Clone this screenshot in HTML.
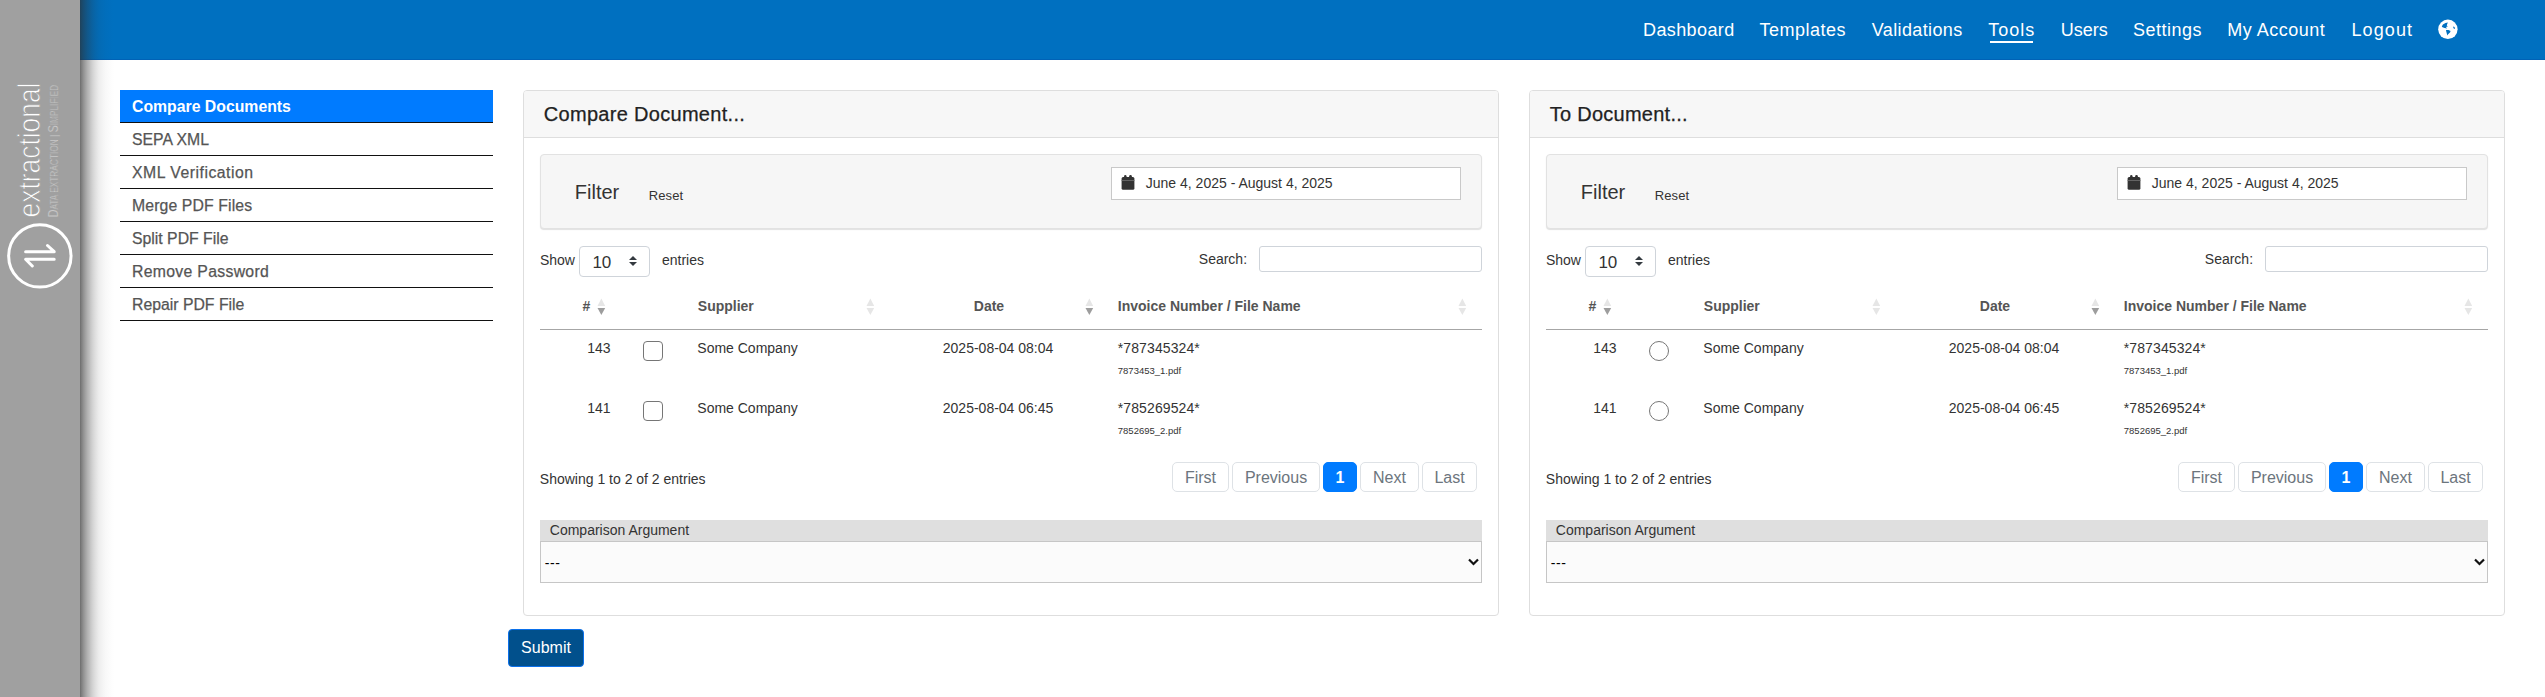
<!DOCTYPE html>
<html><head><meta charset="utf-8">
<style>
*{box-sizing:border-box;margin:0;padding:0}
html,body{width:2545px;height:697px;overflow:hidden;background:#fff;font-family:"Liberation Sans",sans-serif;color:#212529}
.abs{position:absolute}
#side{position:absolute;left:0;top:0;width:80px;height:697px;background:#a0a0a0;z-index:5}
#shad{position:absolute;left:80px;top:0;width:36px;height:697px;z-index:5;background:linear-gradient(to right,rgba(46,46,46,0.67) 0.5px,rgba(46,46,46,0.617) 1.5px,rgba(46,46,46,0.569) 2.5px,rgba(46,46,46,0.522) 3.5px,rgba(46,46,46,0.445) 5.5px,rgba(46,46,46,0.368) 7.5px,rgba(46,46,46,0.311) 9.5px,rgba(46,46,46,0.273) 10.5px,rgba(46,46,46,0.215) 12.5px,rgba(46,46,46,0.167) 14.5px,rgba(46,46,46,0.129) 16.5px,rgba(46,46,46,0.096) 18.5px,rgba(46,46,46,0.072) 20.5px,rgba(46,46,46,0.053) 22.5px,rgba(46,46,46,0.033) 25.5px,rgba(46,46,46,0.019) 28.5px,rgba(46,46,46,0.005) 32.5px,rgba(46,46,46,0) 35.5px)}
#nav{position:absolute;left:80px;top:0;width:2465px;height:60px;background:#0070c0;border-bottom:1px solid #0062b6}
.nl{position:absolute;top:19px;font-size:18px;color:#fff;white-space:nowrap;line-height:22px}
#menu{position:absolute;left:120px;top:90px;width:373px}
#menu div{height:33px;border-bottom:1px solid #111;font-size:15.8px;color:#555;padding-left:12px;line-height:34px;white-space:nowrap;-webkit-text-stroke:0.25px #555}
#menu div.act{background:#007bff;color:#fff;font-weight:bold;-webkit-text-stroke:0}
.t{position:absolute;white-space:nowrap;line-height:1}
.pg{border:1px solid #dee2e6;border-radius:5px;color:#6c757d;font-size:16px;text-align:center;line-height:30px;background:#fff}
.pg.act{background:#007bff;border-color:#007bff;color:#fff;font-weight:bold}
</style></head><body>
<div id="side"><svg width="80" height="697" viewBox="0 0 80 697" style="position:absolute;left:0;top:0">
<g transform="translate(40,217.5) rotate(-90)"><text x="0" y="0" transform="scale(0.841,1)" font-family="Liberation Sans" font-size="31.4" fill="#fff" stroke="#a0a0a0" stroke-width="0.9">extractional</text></g>
<g transform="translate(57.6,217.5) rotate(-90)"><text x="0" y="0" transform="scale(0.776,1)" font-family="Liberation Sans" font-size="10.7" fill="#dadada" stroke="#a0a0a0" stroke-width="0.45"><tspan font-size="14.2">D</tspan>ATA EXTRACTION | <tspan font-size="14.2">S</tspan>IMPLIFIED</text></g>
<circle cx="39.85" cy="255.9" r="31.2" fill="none" stroke="#fff" stroke-width="3"/>
<path d="M25.6 251.7 L54.2 251.7 L47.5 245.5 M54.2 259.2 L25.6 259.2 L32.3 266" fill="none" stroke="#fff" stroke-width="3" stroke-linecap="round" stroke-linejoin="round"/>
</svg></div>
<div id="shad"></div>
<div id="nav">
 <span class="nl" style="left:1563.0px;letter-spacing:0.4px">Dashboard</span>
 <span class="nl" style="left:1679.5px;letter-spacing:0.5px">Templates</span>
 <span class="nl" style="left:1791.8px;letter-spacing:0.37px">Validations</span>
 <span class="nl" style="left:1908.2px;letter-spacing:1.0px">Tools</span>
 <span class="nl" style="left:1980.8000000000002px;letter-spacing:0px">Users</span>
 <span class="nl" style="left:2052.9px;letter-spacing:0.5px">Settings</span>
 <span class="nl" style="left:2147.2px;letter-spacing:0.5px">My Account</span>
 <span class="nl" style="left:2271.5px;letter-spacing:1.1px">Logout</span>
</div>
<div class="abs" style="left:1990px;top:41px;width:43px;height:2px;background:#fff"></div>
<svg class="abs" style="left:2433px;top:14px" width="30" height="30" viewBox="0 0 30 30"><circle cx="14.9" cy="15.3" r="9.7" fill="#fff"/><path d="M8.8 12.5 L9.9 10.5 L12.5 9 L14.9 8.4 L14.2 10.1 L13.8 11.4 L14.8 12.6 L12.8 13 L14.2 14.6 L11.6 13.9 L9.5 13.3 Z M13 16.1 L15.5 15.9 L17.6 17 L17 18.5 L15.1 20.2 L14.4 21.5 L13.8 19.4 L13.2 17.3 Z M20.2 12.5 L21.5 12.9 L22 14.6 L21.1 15.1 L20.3 13.8 Z" fill="#0070c0"/></svg>
<div id="menu">
 <div class="act" style="letter-spacing:0px">Compare Documents</div>
 <div style="letter-spacing:0px">SEPA XML</div>
 <div style="letter-spacing:0.5px">XML Verification</div>
 <div style="letter-spacing:0.11px">Merge PDF Files</div>
 <div style="letter-spacing:0px">Split PDF File</div>
 <div style="letter-spacing:0.3px">Remove Password</div>
 <div style="letter-spacing:0px">Repair PDF File</div>
</div>
<div class="abs" style="left:523px;top:90px;width:976px;height:526px;border:1px solid #dedede;border-radius:4px;background:#fff"></div>
<div class="abs" style="left:524px;top:91px;width:974px;height:47px;background:#f7f7f7;border-bottom:1px solid #dedede;border-radius:3px 3px 0 0"></div>
<span class="t" style="left:543.8px;top:104.07px;font-size:20px;color:#222;letter-spacing:0.3px;-webkit-text-stroke:0.25px #222">Compare Document...</span>
<div class="abs" style="left:540px;top:154px;width:942px;height:75px;background:#f6f6f6;border:1px solid #e2e2e2;border-radius:4px;box-shadow:0 1px 1px rgba(0,0,0,.12)"></div>
<span class="t" style="left:574.8px;top:182.07px;font-size:20px;color:#333;">Filter</span>
<span class="t" style="left:648.8px;top:189.00px;font-size:13px;color:#333;letter-spacing:0.1px">Reset</span>
<div class="abs" style="left:1111px;top:167px;width:350px;height:33px;background:#fff;border:1px solid #c9c9c9"></div>
<svg class="abs" style="left:1121px;top:175px" width="14" height="16" viewBox="0 0 14 16"><rect x="0.6" y="2" width="12.8" height="12.7" rx="1.5" fill="#333"/><rect x="3.1" y="0" width="2.4" height="3.5" rx="1.2" fill="#333"/><rect x="8.2" y="0" width="2.6" height="3.5" rx="1.2" fill="#333"/><rect x="0.6" y="5" width="12.8" height="0.9" fill="#6a6a6a"/></svg>
<span class="t" style="left:1145.8px;top:176.15px;font-size:14px;color:#333;">June 4, 2025 - August 4, 2025</span>
<span class="t" style="left:539.9px;top:253.15px;font-size:14px;color:#333;">Show</span>
<div class="abs" style="left:579px;top:246px;width:71px;height:31px;background:#fff;border:1px solid #cfd4da;border-radius:4px"></div>
<span class="t" style="left:592.4px;top:253.61px;font-size:17px;color:#333;">10</span>
<svg class="abs" style="left:629px;top:256px" width="8" height="10" viewBox="0 0 8 10"><path d="M0 4 L4 0 L8 4 Z M0 6 L4 10 L8 6 Z" fill="#343a40"/></svg>
<span class="t" style="left:662px;top:253.15px;font-size:14px;color:#333;">entries</span>
<span class="t" style="left:1198.8px;top:252.15px;font-size:14px;color:#333;">Search:</span>
<div class="abs" style="left:1259px;top:246px;width:223px;height:26px;background:#fff;border:1px solid #cfd4da;border-radius:3px"></div>
<span class="t" style="left:582.5px;top:299.15px;font-size:14px;font-weight:bold;color:#555;">#</span>
<svg class="abs" style="left:597px;top:298px" width="9" height="18" viewBox="0 0 9 18"><path d="M0.5 7.9 L4.35 0.4 L8.2 7.9 Z" fill="#e6e6e6"/><path d="M0.5 10.1 L4.35 17.1 L8.2 10.1 Z" fill="#9d9d9d"/></svg>
<span class="t" style="left:697.8px;top:299.15px;font-size:14px;font-weight:bold;color:#555;">Supplier</span>
<svg class="abs" style="left:866px;top:298px" width="9" height="18" viewBox="0 0 9 18"><path d="M0.5 7.9 L4.35 0.4 L8.2 7.9 Z" fill="#e6e6e6"/><path d="M0.5 10.1 L4.35 17.1 L8.2 10.1 Z" fill="#e6e6e6"/></svg>
<span class="t" style="left:973.8px;top:299.15px;font-size:14px;font-weight:bold;color:#555;">Date</span>
<svg class="abs" style="left:1085px;top:298px" width="9" height="18" viewBox="0 0 9 18"><path d="M0.5 7.9 L4.35 0.4 L8.2 7.9 Z" fill="#e6e6e6"/><path d="M0.5 10.1 L4.35 17.1 L8.2 10.1 Z" fill="#9d9d9d"/></svg>
<span class="t" style="left:1117.8px;top:299.15px;font-size:14px;font-weight:bold;color:#555;">Invoice Number / File Name</span>
<svg class="abs" style="left:1458px;top:298px" width="9" height="18" viewBox="0 0 9 18"><path d="M0.5 7.9 L4.35 0.4 L8.2 7.9 Z" fill="#e6e6e6"/><path d="M0.5 10.1 L4.35 17.1 L8.2 10.1 Z" fill="#e6e6e6"/></svg>
<div class="abs" style="left:540px;top:329px;width:942px;height:1px;background:#a6a6a6"></div>
<span class="t" style="left:587.3px;top:341.15px;font-size:14px;color:#333;">143</span>
<div class="abs" style="left:643px;top:341px;width:20px;height:20px;border:1px solid #767676;border-radius:4px;background:#fff"></div>
<span class="t" style="left:697.3px;top:341.15px;font-size:14px;color:#333;">Some Company</span>
<span class="t" style="left:942.8px;top:341.15px;font-size:14px;color:#333;">2025-08-04 08:04</span>
<span class="t" style="left:1117.8px;top:341.15px;font-size:14px;color:#333;letter-spacing:0.1px">*787345324*</span>
<span class="t" style="left:1117.8px;top:365.96px;font-size:9.5px;color:#333;">7873453_1.pdf</span>
<span class="t" style="left:587.3px;top:401.15px;font-size:14px;color:#333;">141</span>
<div class="abs" style="left:643px;top:401px;width:20px;height:20px;border:1px solid #767676;border-radius:4px;background:#fff"></div>
<span class="t" style="left:697.3px;top:401.15px;font-size:14px;color:#333;">Some Company</span>
<span class="t" style="left:942.8px;top:401.15px;font-size:14px;color:#333;">2025-08-04 06:45</span>
<span class="t" style="left:1117.8px;top:401.15px;font-size:14px;color:#333;letter-spacing:0.1px">*785269524*</span>
<span class="t" style="left:1117.8px;top:425.96px;font-size:9.5px;color:#333;">7852695_2.pdf</span>
<span class="t" style="left:539.8px;top:472.15px;font-size:14px;color:#333;">Showing 1 to 2 of 2 entries</span>
<div class="abs pg" style="left:1172px;top:462px;width:57px;height:30px">First</div>
<div class="abs pg" style="left:1232px;top:462px;width:88px;height:30px">Previous</div>
<div class="abs pg act" style="left:1323px;top:462px;width:34px;height:30px">1</div>
<div class="abs pg" style="left:1360px;top:462px;width:59px;height:30px">Next</div>
<div class="abs pg" style="left:1422px;top:462px;width:55px;height:30px">Last</div>
<div class="abs" style="left:540px;top:520px;width:942px;height:21px;background:#dfdfdf"></div>
<span class="t" style="left:549.8px;top:523.15px;font-size:14px;color:#333;">Comparison Argument</span>
<div class="abs" style="left:540px;top:541px;width:942px;height:42px;background:#fbfbfb;border:1px solid #c6c6c6"></div>
<span class="t" style="left:544.8px;top:556.15px;font-size:14px;color:#000;letter-spacing:0.6px">---</span>
<svg class="abs" style="left:1468px;top:558px" width="11" height="8" viewBox="0 0 11 8"><path d="M1 1.5 L5.5 6 L10 1.5" stroke="#111" stroke-width="2.2" fill="none"/></svg>
<div class="abs" style="left:1529px;top:90px;width:976px;height:526px;border:1px solid #dedede;border-radius:4px;background:#fff"></div>
<div class="abs" style="left:1530px;top:91px;width:974px;height:47px;background:#f7f7f7;border-bottom:1px solid #dedede;border-radius:3px 3px 0 0"></div>
<span class="t" style="left:1549.8px;top:104.07px;font-size:20px;color:#222;letter-spacing:0.25px;-webkit-text-stroke:0.25px #222">To Document...</span>
<div class="abs" style="left:1546px;top:154px;width:942px;height:75px;background:#f6f6f6;border:1px solid #e2e2e2;border-radius:4px;box-shadow:0 1px 1px rgba(0,0,0,.12)"></div>
<span class="t" style="left:1580.8px;top:182.07px;font-size:20px;color:#333;">Filter</span>
<span class="t" style="left:1654.8px;top:189.00px;font-size:13px;color:#333;letter-spacing:0.1px">Reset</span>
<div class="abs" style="left:2117px;top:167px;width:350px;height:33px;background:#fff;border:1px solid #c9c9c9"></div>
<svg class="abs" style="left:2127px;top:175px" width="14" height="16" viewBox="0 0 14 16"><rect x="0.6" y="2" width="12.8" height="12.7" rx="1.5" fill="#333"/><rect x="3.1" y="0" width="2.4" height="3.5" rx="1.2" fill="#333"/><rect x="8.2" y="0" width="2.6" height="3.5" rx="1.2" fill="#333"/><rect x="0.6" y="5" width="12.8" height="0.9" fill="#6a6a6a"/></svg>
<span class="t" style="left:2151.8px;top:176.15px;font-size:14px;color:#333;">June 4, 2025 - August 4, 2025</span>
<span class="t" style="left:1545.9px;top:253.15px;font-size:14px;color:#333;">Show</span>
<div class="abs" style="left:1585px;top:246px;width:71px;height:31px;background:#fff;border:1px solid #cfd4da;border-radius:4px"></div>
<span class="t" style="left:1598.4px;top:253.61px;font-size:17px;color:#333;">10</span>
<svg class="abs" style="left:1635px;top:256px" width="8" height="10" viewBox="0 0 8 10"><path d="M0 4 L4 0 L8 4 Z M0 6 L4 10 L8 6 Z" fill="#343a40"/></svg>
<span class="t" style="left:1668px;top:253.15px;font-size:14px;color:#333;">entries</span>
<span class="t" style="left:2204.8px;top:252.15px;font-size:14px;color:#333;">Search:</span>
<div class="abs" style="left:2265px;top:246px;width:223px;height:26px;background:#fff;border:1px solid #cfd4da;border-radius:3px"></div>
<span class="t" style="left:1588.5px;top:299.15px;font-size:14px;font-weight:bold;color:#555;">#</span>
<svg class="abs" style="left:1603px;top:298px" width="9" height="18" viewBox="0 0 9 18"><path d="M0.5 7.9 L4.35 0.4 L8.2 7.9 Z" fill="#e6e6e6"/><path d="M0.5 10.1 L4.35 17.1 L8.2 10.1 Z" fill="#9d9d9d"/></svg>
<span class="t" style="left:1703.8px;top:299.15px;font-size:14px;font-weight:bold;color:#555;">Supplier</span>
<svg class="abs" style="left:1872px;top:298px" width="9" height="18" viewBox="0 0 9 18"><path d="M0.5 7.9 L4.35 0.4 L8.2 7.9 Z" fill="#e6e6e6"/><path d="M0.5 10.1 L4.35 17.1 L8.2 10.1 Z" fill="#e6e6e6"/></svg>
<span class="t" style="left:1979.8px;top:299.15px;font-size:14px;font-weight:bold;color:#555;">Date</span>
<svg class="abs" style="left:2091px;top:298px" width="9" height="18" viewBox="0 0 9 18"><path d="M0.5 7.9 L4.35 0.4 L8.2 7.9 Z" fill="#e6e6e6"/><path d="M0.5 10.1 L4.35 17.1 L8.2 10.1 Z" fill="#9d9d9d"/></svg>
<span class="t" style="left:2123.8px;top:299.15px;font-size:14px;font-weight:bold;color:#555;">Invoice Number / File Name</span>
<svg class="abs" style="left:2464px;top:298px" width="9" height="18" viewBox="0 0 9 18"><path d="M0.5 7.9 L4.35 0.4 L8.2 7.9 Z" fill="#e6e6e6"/><path d="M0.5 10.1 L4.35 17.1 L8.2 10.1 Z" fill="#e6e6e6"/></svg>
<div class="abs" style="left:1546px;top:329px;width:942px;height:1px;background:#a6a6a6"></div>
<span class="t" style="left:1593.3px;top:341.15px;font-size:14px;color:#333;">143</span>
<div class="abs" style="left:1649px;top:341px;width:20px;height:20px;border:1px solid #767676;border-radius:50%;background:#fff"></div>
<span class="t" style="left:1703.3px;top:341.15px;font-size:14px;color:#333;">Some Company</span>
<span class="t" style="left:1948.8px;top:341.15px;font-size:14px;color:#333;">2025-08-04 08:04</span>
<span class="t" style="left:2123.8px;top:341.15px;font-size:14px;color:#333;letter-spacing:0.1px">*787345324*</span>
<span class="t" style="left:2123.8px;top:365.96px;font-size:9.5px;color:#333;">7873453_1.pdf</span>
<span class="t" style="left:1593.3px;top:401.15px;font-size:14px;color:#333;">141</span>
<div class="abs" style="left:1649px;top:401px;width:20px;height:20px;border:1px solid #767676;border-radius:50%;background:#fff"></div>
<span class="t" style="left:1703.3px;top:401.15px;font-size:14px;color:#333;">Some Company</span>
<span class="t" style="left:1948.8px;top:401.15px;font-size:14px;color:#333;">2025-08-04 06:45</span>
<span class="t" style="left:2123.8px;top:401.15px;font-size:14px;color:#333;letter-spacing:0.1px">*785269524*</span>
<span class="t" style="left:2123.8px;top:425.96px;font-size:9.5px;color:#333;">7852695_2.pdf</span>
<span class="t" style="left:1545.8px;top:472.15px;font-size:14px;color:#333;">Showing 1 to 2 of 2 entries</span>
<div class="abs pg" style="left:2178px;top:462px;width:57px;height:30px">First</div>
<div class="abs pg" style="left:2238px;top:462px;width:88px;height:30px">Previous</div>
<div class="abs pg act" style="left:2329px;top:462px;width:34px;height:30px">1</div>
<div class="abs pg" style="left:2366px;top:462px;width:59px;height:30px">Next</div>
<div class="abs pg" style="left:2428px;top:462px;width:55px;height:30px">Last</div>
<div class="abs" style="left:1546px;top:520px;width:942px;height:21px;background:#dfdfdf"></div>
<span class="t" style="left:1555.8px;top:523.15px;font-size:14px;color:#333;">Comparison Argument</span>
<div class="abs" style="left:1546px;top:541px;width:942px;height:42px;background:#fbfbfb;border:1px solid #c6c6c6"></div>
<span class="t" style="left:1550.8px;top:556.15px;font-size:14px;color:#000;letter-spacing:0.6px">---</span>
<svg class="abs" style="left:2474px;top:558px" width="11" height="8" viewBox="0 0 11 8"><path d="M1 1.5 L5.5 6 L10 1.5" stroke="#111" stroke-width="2.2" fill="none"/></svg>
<div class="abs" style="left:508px;top:629px;width:76px;height:38px;background:#01508c;border:1px solid #0b70ea;border-radius:4px;color:#fff;font-size:16px;line-height:35px;text-align:center">Submit</div>
</body></html>
